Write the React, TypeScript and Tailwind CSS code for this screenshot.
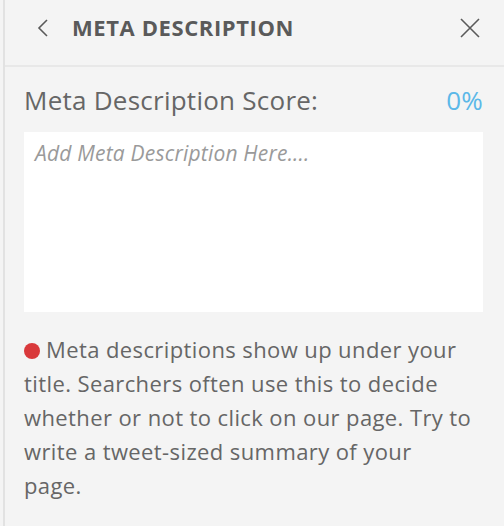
import React from "react";

const App = () => {
  return (
    <div className="w-[504px] h-[526px] bg-[#f4f4f4] pl-[3px] font-['Open_Sans',sans-serif]">
      <div className="h-full border-l-2 border-[#e2e2e2]">
        {/* header */}
        <div className="h-[67px] border-b-2 border-[#e8e8e8] flex items-center pb-[10px] pl-[32px] pr-[24px]">
          <svg width="12" height="18" viewBox="0 0 12 18" fill="none" stroke="#5a5a5a" strokeWidth="1.6">
            <path d="M10 1 L2 9 L10 17" />
          </svg>
          <h1 className="ml-[23px] text-[22px] font-bold tracking-[0.6px] text-[#5a5a5a]">META DESCRIPTION</h1>
          <button className="ml-auto">
            <svg width="20" height="20" viewBox="0 0 20 20" fill="none" stroke="#5a5a5a" strokeWidth="1.6">
              <path d="M1 1 L19 19 M19 1 L1 19" />
            </svg>
          </button>
        </div>

        <div className="pl-[19px] pr-[21px]">
          <div className="flex items-center justify-between mt-[16px] leading-[34px] text-[26px] tracking-[0.25px]">
            <span className="text-[#666]">Meta Description Score:</span>
            <span className="text-[#5bb8e8]">0%</span>
          </div>

          <textarea
            className="block mt-[15px] w-full h-[180px] bg-white resize-none outline-none px-[11px] pt-[6px] text-[21px] tracking-[0.2px] italic placeholder:text-[#9a9a9a]"
            placeholder="Add Meta Description Here...."
          />

          <p className="mt-[20px] text-[22px] leading-[34px] tracking-[0.4px] text-[#666]">
            <span className="inline-block w-[16px] h-[16px] rounded-full bg-[#d9393b] mr-[6px] align-[-1px]" />
            Meta descriptions show up under your title. Searchers often use this to decide
            whether or not to click on our page. Try to write a tweet-sized summary of your
            <br />
            page.
          </p>
        </div>
      </div>
    </div>
  );
};

export default App;
